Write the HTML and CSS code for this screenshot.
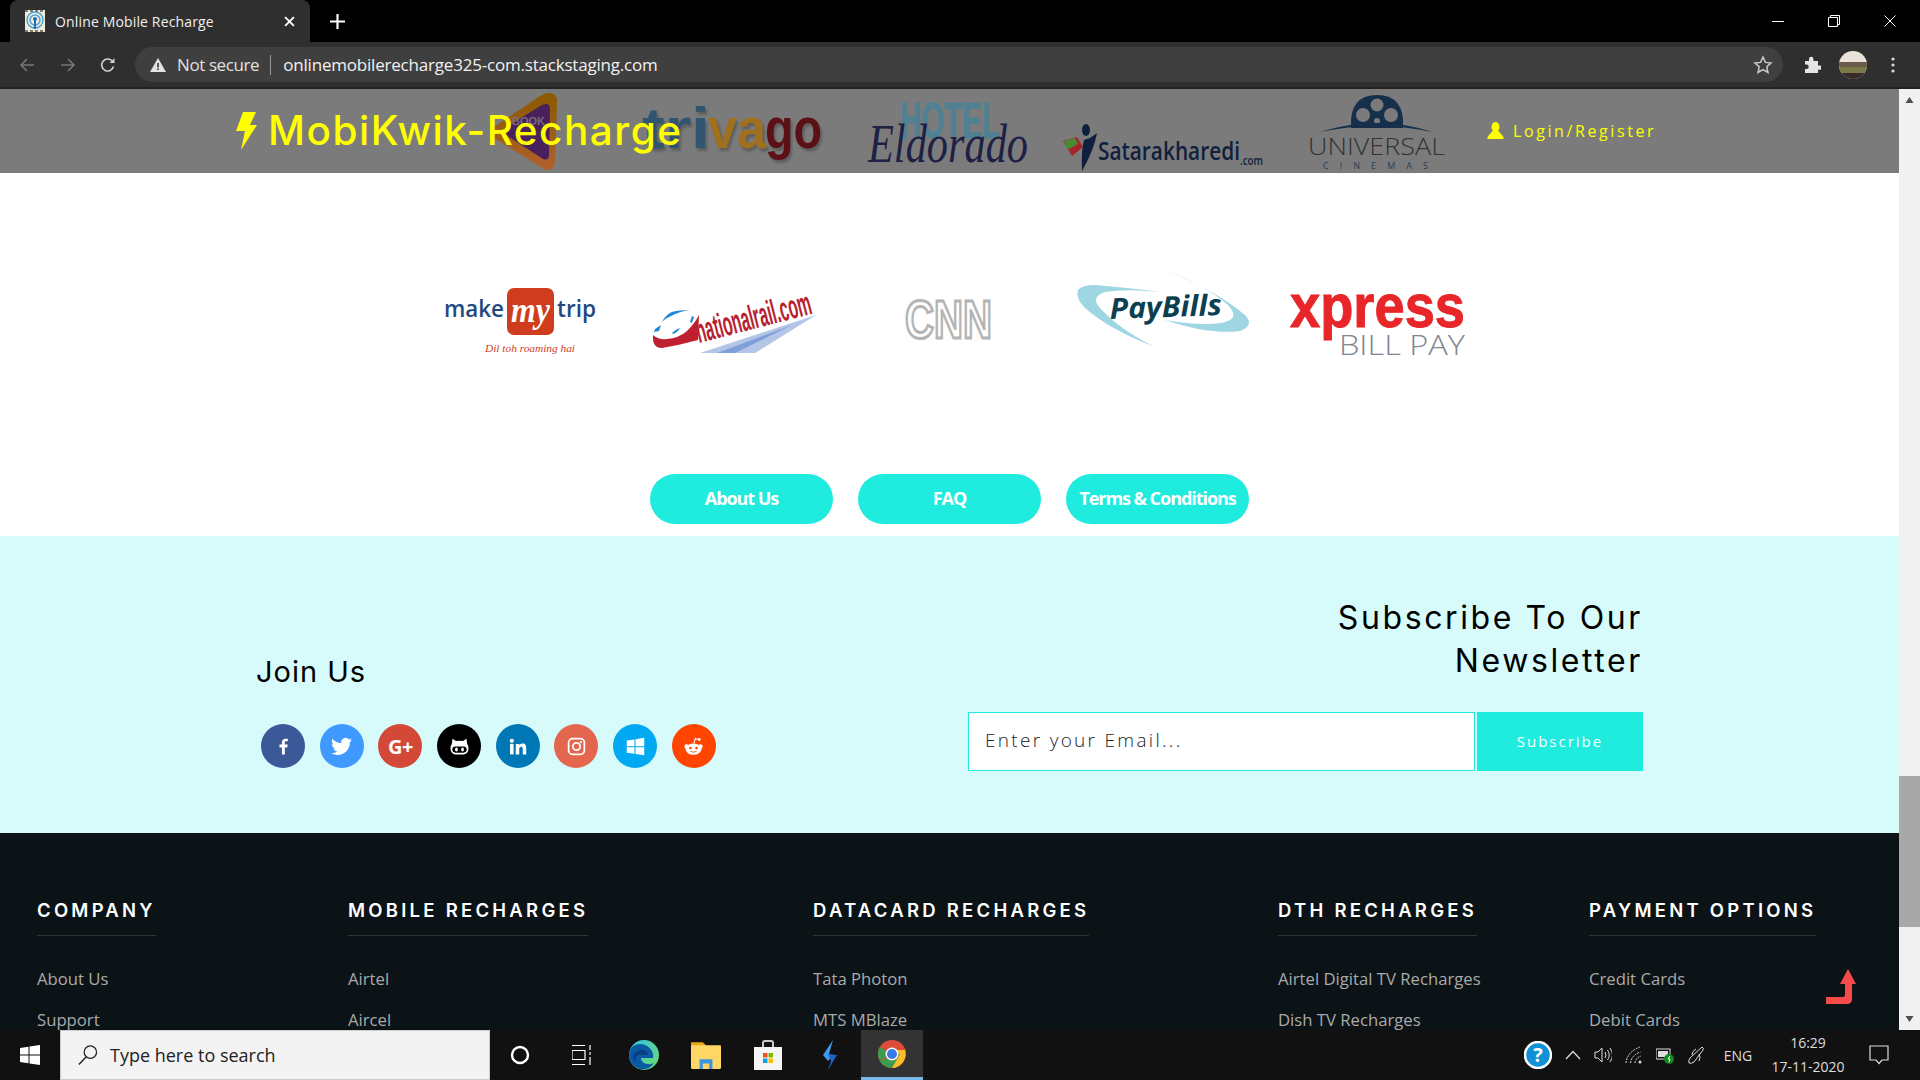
FILE: index.html
```html
<!DOCTYPE html>
<html>

<head>
	<meta charset="UTF-8">
	<meta name="viewport" content="width=device-width, initial-scale=1.0">
	<title>Online Mobile Recharge</title>
	<link rel="stylesheet" href="styles.css">
</head>

<body>
	<div class="tabstrip">
		<div class="tab">
			<svg class="favicon" viewBox="0 0 20 22">
				<rect width="20" height="22" fill="#f4ecd8" />
				<path d="M0 1h20M0 21h20" stroke="#333" stroke-width="2" stroke-dasharray="3 2" opacity=".6" />
				<circle cx="10" cy="10" r="8" fill="none" stroke="#4aa3d8" stroke-width="1.5" />
				<circle cx="10" cy="10" r="5" fill="none" stroke="#4aa3d8" stroke-width="1.5" />
				<circle cx="10" cy="9" r="2" fill="#1f6fb5" />
				<rect x="9" y="9" width="2" height="10" fill="#1f6fb5" />
			</svg>
			<span class="tab-title">Online Mobile Recharge</span>
			<svg class="tab-close" viewBox="0 0 10 10"><path d="M1 1l8 8M9 1l-8 8" stroke="#fff" stroke-width="1.7" /></svg>
		</div>
		<svg class="tab-new" viewBox="0 0 14 14"><path d="M7 0v14M0 7h14" stroke="#fff" stroke-width="2" /></svg>
		<div class="winctrl">
			<svg viewBox="0 0 12 12"><path d="M0 6.500h12" stroke="#fff" /></svg>
			<svg viewBox="0 0 12 12"><path d="M.5 2.500h9v9h-9zM2.500 2.500v-2h9v9h-2" fill="none" stroke="#fff" /></svg>
			<svg viewBox="0 0 12 12"><path d="M.5.500l11 11M11.500.500l-11 11" stroke="#fff" /></svg>
		</div>
	</div>

	<div class="toolbar">
		<svg class="nav" viewBox="0 0 16 16"><path d="M15 8H2M8 2L2 8l6 6" fill="none" stroke="#777" stroke-width="1.6" /></svg>
		<svg class="nav" viewBox="0 0 16 16"><path d="M1 8h13M8 2l6 6-6 6" fill="none" stroke="#777" stroke-width="1.6" /></svg>
		<svg class="nav" viewBox="0 0 16 16"><path d="M13.500 9.500A6 6 0 1 1 12 3.800" fill="none" stroke="#d0d0d0" stroke-width="1.6" /><path d="M14.500 1v5h-5z" fill="#d0d0d0" /></svg>
		<div class="omnibox">
			<svg class="warn" viewBox="0 0 16 14"><path d="M8 0l8 14H0z" fill="#e3e3e3" /><path d="M7.200 5h1.600v4.500H7.200zM7.200 10.500h1.600V12H7.200z" fill="#333" /></svg>
			<span class="notsecure">Not secure</span>
			<span class="urlsep"></span>
			<span class="url">onlinemobilerecharge325-com.stackstaging.com</span>
			<svg class="star" viewBox="0 0 20 20"><path d="M10 2l2.400 5.400 5.600.6-4.200 3.800 1.200 5.700L10 14.600l-5 2.900 1.200-5.700L2 8l5.600-.6z" fill="none" stroke="#ccc" stroke-width="1.500" /></svg>
		</div>
		<svg class="puzzle" viewBox="0 0 18 18"><path d="M2 5h4V3a2.200 2.200 0 0 1 4.400 0v2H15v4.400h2a2.200 2.200 0 0 1 0 4.400h-2V17H2v-4h1.500a2.200 2.200 0 0 0 0-4.400H2z" fill="#e4e4e4" /></svg>
		<svg class="avatar" viewBox="0 0 28 28">
			<clipPath id="av"><circle cx="14" cy="14" r="14" /></clipPath>
			<g clip-path="url(#av)">
				<rect width="28" height="28" fill="#e9e3da" />
				<rect y="11" width="28" height="5" fill="#6b5a4a" />
				<rect y="16" width="28" height="6" fill="#7d7a4a" />
				<rect y="22" width="28" height="6" fill="#3a2a2a" />
			</g>
		</svg>
		<svg class="kebab" viewBox="0 0 4 16"><circle cx="2" cy="2" r="1.600" fill="#ddd" /><circle cx="2" cy="8" r="1.600" fill="#ddd" /><circle cx="2" cy="14" r="1.600" fill="#ddd" /></svg>
	</div>

	<div class="viewport">
		<div class="page">
			<header class="topbar">
				<div class="logos">
					<svg viewBox="413 89 215 84" width="215" height="84">
						<defs>
							<linearGradient id="bookrim" x1="0" y1="0" x2="0" y2="1">
								<stop offset="0" stop-color="#8a5a00" />
								<stop offset="1" stop-color="#b0602c" />
							</linearGradient>
						</defs>
						<path d="M549 93q9 0 8 10l-2 58q-1 12-11 8l-50-31q-7-5 0-11l46-31q5-3 9-3z" fill="url(#bookrim)" />
						<path d="M546 104q4 0 4 5l-1 46q0 6-6 4l-37-24q-6-4 0-8l36-22z" fill="#48205c" />
						<text x="512" y="125" class="logo-book">BOOK</text>
					</svg>
					<svg viewBox="628 89 215 84" width="215" height="84">
						<g class="logo-shadow">
							<text x="642" y="148" textLength="68" lengthAdjust="spacingAndGlyphs" class="logo-trivago" fill="#30566f">tri</text>
							<text x="708" y="148" textLength="58" lengthAdjust="spacingAndGlyphs" class="logo-trivago" fill="#a0701c">va</text>
							<text x="765" y="148" textLength="57" lengthAdjust="spacingAndGlyphs" class="logo-trivago" fill="#5c1015">go</text>
						</g>
					</svg>
					<svg viewBox="843 89 215 84" width="215" height="84">
						<text x="900" y="138" textLength="100" lengthAdjust="spacingAndGlyphs" class="logo-hotel">HOTEL</text>
						<text x="868" y="162" textLength="160" lengthAdjust="spacingAndGlyphs" class="logo-eldorado">Eldorado</text>
					</svg>
					<svg viewBox="1058 89 215 84" width="215" height="84">
						<path d="M1063 141l14-4 6 10-11 9z" fill="#a8242a" />
						<path d="M1064 141l11-3 3 6-11 6z" fill="#4b8a35" />
						<ellipse cx="1086" cy="130" rx="4" ry="6" fill="#101f3d" />
						<path d="M1090 138l7-5q-3 17-15 38-1-20 2-31z" fill="#101f3d" />
						<text x="1098" y="160" textLength="142" lengthAdjust="spacingAndGlyphs" class="logo-satara">Satarakharedi</text>
						<text x="1240" y="165" textLength="23" lengthAdjust="spacingAndGlyphs" class="logo-satara-com">.com</text>
					</svg>
					<svg viewBox="1273 89 215 84" width="215" height="84">
						<path d="M1351 128q-2-33 26-33t26 33z" fill="#162f4a" />
						<circle cx="1377" cy="105" r="6.500" fill="#7b7b7b" />
						<circle cx="1363" cy="115" r="7" fill="#7b7b7b" />
						<circle cx="1391" cy="115" r="7" fill="#7b7b7b" />
						<circle cx="1377" cy="121" r="3" fill="#7b7b7b" />
						<path d="M1320 132q57-18 113 0q-57-12-113 0z" fill="#162f4a" />
						<text x="1308" y="155" textLength="137" lengthAdjust="spacingAndGlyphs" class="logo-universal">UNIVERSAL</text>
						<text x="1323" y="169" textLength="105" class="logo-cinemas">CINEMAS</text>
					</svg>
				</div>
				<a class="brand">
					<svg class="bolt" viewBox="0 0 21 38"><path d="M7 0h13l-6 13h7L5 38l4-19H0z" fill="#ff0" /></svg>
					<span>MobiKwik-Recharge</span>
				</a>
				<a class="login">
					<svg class="login-icon" viewBox="0 0 17 17"><ellipse cx="8.500" cy="5" rx="4" ry="5" fill="#ff0" /><path d="M5.500 9h6l5 6v2H.5v-2z" fill="#ff0" /></svg>
					<span>Login/Register</span>
				</a>
			</header>

			<section class="partners">
				<div class="logos">
					<svg viewBox="413 270 215 100" width="215" height="100">
						<text x="444" y="317" textLength="60" lengthAdjust="spacingAndGlyphs" class="logo-mmt">make</text>
						<rect x="507" y="288" width="47" height="47" rx="7" fill="#d03d1e" />
						<text x="511" y="322" textLength="39" lengthAdjust="spacingAndGlyphs" class="logo-my">my</text>
						<text x="557" y="317" textLength="39" lengthAdjust="spacingAndGlyphs" class="logo-mmt">trip</text>
						<text x="485" y="352" textLength="90" lengthAdjust="spacingAndGlyphs" class="logo-dil">Dil toh roaming hai</text>
					</svg>
					<svg viewBox="628 270 215 100" width="215" height="100">
						<path d="M816 315L755 353h-55z" fill="#b3c6e8" />
						<path d="M792 325L735 353h-18z" fill="#7f9fd8" />
						<path d="M653 335q5 5 14 4 12-1 20-8 8-8 12-16l-1 25q-18 5-36 8-10 0-9-13z" fill="#c01f30" />
						<path d="M662 322q5-10 14-11t14-1q-9 1-19 6-5 2-9 6z" fill="#1e8ad6" />
						<path d="M655 329l6-4-2 6-5 1zM672 333q4-4 8-5-2 4-7 6zM690 322l2-6 2 1-2 6z" fill="#1e8ad6" />
						<text x="699" y="343" textLength="118" lengthAdjust="spacingAndGlyphs" transform="rotate(-14.500 699 343)" class="logo-rail">nationalrail.com</text>
					</svg>
					<svg viewBox="843 270 215 100" width="215" height="100">
						<text x="905" y="338" textLength="87" lengthAdjust="spacingAndGlyphs" class="logo-cnn">CNN</text>
					</svg>
					<svg viewBox="1058 270 215 100" width="215" height="100">
						<path d="M1078 290q7-7 27-4 35 3 62 7-37-5-62-1-15 5-5 16 20 22 55 39-45-17-70-39-10-10-7-18z" fill="#9ed6e4" />
						<path d="M1165 270q50 20 80 45 10 10-5 16-30 4-75-11 40 7 60 2 15-4 3-17-23-20-63-35z" fill="#9ed6e4" />
						<text x="1110" y="319" textLength="112" lengthAdjust="spacingAndGlyphs" transform="rotate(-2 1110 319)" class="logo-paybills">PayBills</text>
					</svg>
					<svg viewBox="1273 270 215 100" width="215" height="100">
						<text x="1290" y="327" textLength="175" lengthAdjust="spacingAndGlyphs" class="logo-xpress">xpress</text>
						<text x="1339" y="355" textLength="126" lengthAdjust="spacingAndGlyphs" class="logo-billpay">BILL PAY</text>
					</svg>
				</div>
				<div class="pillrow">
					<a class="pill">About Us</a>
					<a class="pill">FAQ</a>
					<a class="pill">Terms &amp; Conditions</a>
				</div>
			</section>

			<section class="connect">
				<div class="join">
					<h2>Join Us</h2>
					<div class="social">
						<a class="soc soc-fb"><svg viewBox="0 0 24 24"><path d="M13.500 21v-8h2.800l.5-3.300h-3.300V7.700c0-1 .3-1.600 1.700-1.600h1.700V3.200c-.4 0-1.400-.2-2.500-.2-2.500 0-4.200 1.500-4.200 4.300v2.400H7.400V13h2.800v8z" fill="#fff" /></svg></a>
						<a class="soc soc-tw"><svg viewBox="0 0 24 24"><path d="M23.953 4.570a10 10 0 01-2.825.775 4.958 4.958 0 002.163-2.723c-.951.555-2.005.959-3.127 1.184a4.920 4.920 0 00-8.384 4.482C7.690 8.095 4.067 6.130 1.640 3.162a4.822 4.822 0 00-.666 2.475c0 1.710.870 3.213 2.188 4.096a4.904 4.904 0 01-2.228-.616v.060a4.923 4.923 0 003.946 4.827 4.996 4.996 0 01-2.212.085 4.936 4.936 0 004.604 3.417 9.867 9.867 0 01-6.102 2.105c-.390 0-.779-.023-1.170-.067a13.995 13.995 0 007.557 2.209c9.053 0 13.998-7.496 13.998-13.985 0-.210 0-.420-.015-.630A9.935 9.935 0 0024 4.590z" fill="#fff" /></svg></a>
						<a class="soc soc-gp"><span>G+</span></a>
						<a class="soc soc-gh"><svg viewBox="0 0 24 24"><path d="M4 3l4 2.800q4-1 8 0L20 3l.8 6q1.700 2 1.500 5.500-.3 5.500-5.300 6.500H7q-5-1-5.300-6.500Q1.500 11 3.200 9z" fill="#fff" /><rect x="3.800" y="12" width="16.400" height="7" rx="3.500" fill="#000" /><ellipse cx="8.500" cy="15.500" rx="1.600" ry="2.300" fill="#fff" /><ellipse cx="15.500" cy="15.500" rx="1.600" ry="2.300" fill="#fff" /></svg></a>
						<a class="soc soc-in"><svg viewBox="0 0 24 24"><circle cx="5.500" cy="5.500" r="2.400" fill="#fff" /><rect x="3.500" y="9" width="4" height="12" fill="#fff" /><path d="M10 9h3.800v1.700c.7-1.200 2.100-2 3.900-2 3.400 0 4.300 2.200 4.300 5.400V21h-4v-6c0-1.500-.3-2.800-1.900-2.800-1.700 0-2.100 1.300-2.100 2.800v6h-4z" fill="#fff" /></svg></a>
						<a class="soc soc-ig"><svg viewBox="0 0 24 24"><rect x="3" y="3" width="18" height="18" rx="4.500" fill="none" stroke="#fff" stroke-width="2" /><circle cx="12" cy="12" r="4.200" fill="none" stroke="#fff" stroke-width="2" /><circle cx="17" cy="7" r="1.200" fill="#fff" /></svg></a>
						<a class="soc soc-win"><svg viewBox="0 0 24 24"><path d="M2 5.200l8.800-1.300v7.700H2zM12 3.700L22 2v9.600H12zM2 12.800h8.800v7.500L2 19zM12 12.800h10V22l-10-1.500z" fill="#fff" /></svg></a>
						<a class="soc soc-rd"><svg viewBox="0 0 24 24"><path d="M12.500 8.500L14 3l4 1" fill="none" stroke="#fff" stroke-width="1.200" /><circle cx="18.500" cy="4" r="1.700" fill="#fff" /><circle cx="4" cy="12" r="2.500" fill="#fff" /><circle cx="20" cy="12" r="2.500" fill="#fff" /><ellipse cx="12" cy="15" rx="9" ry="6.500" fill="#fff" /><circle cx="8.500" cy="13.800" r="1.500" fill="#ff4500" /><circle cx="15.500" cy="13.800" r="1.500" fill="#ff4500" /><path d="M8.500 17.500q3.500 2 7 0" fill="none" stroke="#ff4500" stroke-width="1" /></svg></a>
					</div>
				</div>
				<div class="newsletter">
					<h2>Subscribe To Our<br>Newsletter</h2>
					<form class="subform">
						<input type="text" class="subinput" placeholder="Enter your Email...">
						<button type="button" class="subbtn">Subscribe</button>
					</form>
				</div>
			</section>

			<footer class="sitefoot">
				<div class="footcol">
					<h3>COMPANY</h3>
					<ul>
						<li>About Us</li>
						<li>Support</li>
					</ul>
				</div>
				<div class="footcol">
					<h3>MOBILE RECHARGES</h3>
					<ul>
						<li>Airtel</li>
						<li>Aircel</li>
					</ul>
				</div>
				<div class="footcol">
					<h3>DATACARD RECHARGES</h3>
					<ul>
						<li>Tata Photon</li>
						<li>MTS MBlaze</li>
					</ul>
				</div>
				<div class="footcol">
					<h3>DTH RECHARGES</h3>
					<ul>
						<li>Airtel Digital TV Recharges</li>
						<li>Dish TV Recharges</li>
					</ul>
				</div>
				<div class="footcol">
					<h3>PAYMENT OPTIONS</h3>
					<ul>
						<li>Credit Cards</li>
						<li>Debit Cards</li>
					</ul>
				</div>
			</footer>

			<svg class="totop" viewBox="0 0 30 36"><path d="M22 0l8 15h-4v15q0 5-5 5H0v-7h17q2 0 2-2V15h-5z" fill="#f44a4a" /></svg>
		</div>
		<div class="scrollbar">
			<svg viewBox="0 0 8 6"><path d="M4 0l4 6H0z" fill="#505050" /></svg>
			<div class="track"><div class="thumb"></div></div>
			<svg viewBox="0 0 8 6"><path d="M0 0h8L4 6z" fill="#505050" /></svg>
		</div>
	</div>

	<div class="taskbar">
		<div class="startbtn">
			<svg viewBox="0 0 20 20"><path d="M0 3l8.500-1.200v7.700H0zM9.500 1.600L20 0v9.500H9.500zM0 10.500h8.500v7.700L0 17zM9.500 10.500H20V20L9.500 18.400z" fill="#fff" /></svg>
		</div>
		<div class="searchbox">
			<svg viewBox="0 0 22 22"><circle cx="14" cy="8" r="6.500" fill="none" stroke="#222" stroke-width="1.300" /><path d="M9.500 13L2 21" stroke="#222" stroke-width="1.500" /></svg>
			<span>Type here to search</span>
		</div>
		<div class="tasklist">
			<div class="taskicon"><svg class="i20" viewBox="0 0 20 20"><circle cx="10" cy="10" r="8" fill="none" stroke="#fff" stroke-width="2.400" /></svg></div>
			<div class="taskicon"><svg class="i20" viewBox="0 0 20 20"><path d="M0 .5h13M0 19.500h13M0 5.500h13v9H0z" fill="none" stroke="#fff" stroke-width="1.200" /><path d="M18 0v5M18 7v3M18 12v8" stroke="#fff" stroke-width="1.200" /></svg></div>
			<div class="taskicon">
				<svg class="i30" viewBox="0 0 30 30">
					<defs>
						<linearGradient id="edge1" x1="0" y1="0" x2="1" y2="1"><stop offset="0" stop-color="#2fc6e6" /><stop offset="1" stop-color="#6fdc6a" /></linearGradient>
					</defs>
					<circle cx="15" cy="15" r="15" fill="url(#edge1)" />
					<path d="M0 15C0 6 9 2 16 5c7 3 9 9 8 13H12c0 5 7 8 13 5-4 6-10 7-14 6C4 27 0 21 0 15z" fill="#0c5aa6" />
					<path d="M4 18c0-5 5-9 11-8 3 1 4 3 4 5h-9c-2 0-4 2-3 7-2-1-3-2-3-4z" fill="#0a3f85" />
				</svg>
			</div>
			<div class="taskicon">
				<svg class="i30" viewBox="0 0 28 26"><path d="M0 1h11l3 3v3H0z" fill="#e8a818" /><rect y="4" width="28" height="22" rx="1" fill="#ffd767" /><path d="M8 26v-9h12v9h-3v-5h-6v5z" fill="#3a96dd" /></svg>
			</div>
			<div class="taskicon">
				<svg class="i30" viewBox="0 0 28 30"><path d="M9 8V3q0-2 2-2h6q2 0 2 2v5" fill="none" stroke="#ccc" stroke-width="2" /><rect y="7" width="28" height="23" fill="#f5f5f5" /><rect x="9" y="13" width="4.500" height="4.500" fill="#f25022" /><rect x="14.500" y="13" width="4.500" height="4.500" fill="#7fba00" /><rect x="9" y="18.500" width="4.500" height="4.500" fill="#00a4ef" /><rect x="14.500" y="18.500" width="4.500" height="4.500" fill="#ffb900" /></svg>
			</div>
			<div class="taskicon">
				<svg class="i30" viewBox="0 0 16 30"><path d="M11 0L1 15l5 6 5-6-4-1z" fill="#3f9bf0" /><path d="M6 14l9 1-9 15 3-9z" fill="#1d62c4" /></svg>
			</div>
			<div class="taskicon taskicon-active">
				<svg class="i30" viewBox="0 0 30 30">
					<circle cx="15" cy="15" r="14" fill="#dd4b39" />
					<path d="M15 15L2.900 22a14 14 0 0 1-.1-14z" fill="#3b9c4c" />
					<path d="M2.900 22A14 14 0 0 0 15 29l8-14z" fill="#3b9c4c" />
					<path d="M15 29a14 14 0 0 0 13-18H15l8 4z" fill="#f6c02d" />
					<circle cx="15" cy="15" r="6.500" fill="#fff" />
					<circle cx="15" cy="15" r="5" fill="#3b78e7" />
				</svg>
			</div>
		</div>
		<div class="tray">
			<svg class="tray-help" viewBox="0 0 28 28"><circle cx="14" cy="14" r="13" fill="#0f8fd6" stroke="#fff" stroke-width="2.500" /><text x="14" y="21" class="helpq">?</text></svg>
			<svg class="tray-chev" viewBox="0 0 16 10"><path d="M1 9l7-7.500L15 9" fill="none" stroke="#ddd" stroke-width="1.300" /></svg>
			<svg class="tray-i" viewBox="0 0 18 18"><path d="M1 6h3l4-4v14l-4-4H1z" fill="none" stroke="#ddd" /><path d="M11 6q2 3 0 6M13.500 4q3.500 5 0 10M16 2q5 7 0 14" fill="none" stroke="#ddd" /></svg>
			<svg class="tray-i" viewBox="0 0 18 18"><path d="M1 17Q2 6 15 1M5.500 17q1-8 10-11M10 17q.5-5 6-7" fill="none" stroke="#ddd" stroke-dasharray="2 1" /><circle cx="15" cy="16" r="1.500" fill="#ddd" /></svg>
			<svg class="tray-i" viewBox="0 0 18 18"><rect x="0" y="3" width="14" height="10" fill="#111" stroke="#ddd" /><rect x="2" y="5" width="10" height="6" fill="#ddd" /><circle cx="13" cy="13" r="5" fill="#0f8a1e" /><path d="M14 10l-2 3h2l-1 3" fill="none" stroke="#fff" /></svg>
			<svg class="tray-i" viewBox="0 0 18 18"><path d="M15 1q2 1 1 3L7 16q-3 2-5 1-1-2 1-5zM9 3q-4 2-4 6M12 8q2 3 0 7" fill="none" stroke="#ddd" /></svg>
			<span class="tray-lang">ENG</span>
			<div class="tray-clock">
				<span>16:29</span>
				<span>17-11-2020</span>
			</div>
			<svg class="tray-note" viewBox="0 0 20 20"><path d="M1 1h18v14h-6l-3 3.500L7 15H1z" fill="none" stroke="#ddd" stroke-width="1.200" /></svg>
		</div>
	</div>
</body>

</html>
```

FILE: styles.css
```css
html {
	box-sizing: border-box;
}

*,
*:before,
*:after {
	box-sizing: inherit;
}

body,
h2,
h3,
ul {
	margin: 0;
	padding: 0;
	font-weight: normal;
}

ul {
	list-style: none;
}

svg {
	display: block;
	flex: none;
}

:root {
	--cyan: #1fecdf;
	--chrome: #2f2f2f;
	--head-font: "Inter", "Liberation Sans", sans-serif;
	--body-font: "Open Sans", "Liberation Sans", sans-serif;
}

body {
	display: flex;
	flex-direction: column;
	height: 1080px;
	overflow: hidden;
	font-family: var(--body-font);
	background: #000;
}

/* browser chrome */
.tabstrip {
	display: flex;
	align-items: center;
	height: 42px;
	background: #000;
}

.tab {
	display: flex;
	align-items: center;
	width: 300px;
	height: 42px;
	margin-left: 10px;
	padding: 0 15px;
	border-radius: 8px 8px 0 0;
	background: var(--chrome);
}

.favicon {
	width: 20px;
	height: 22px;
}

.tab-title {
	margin-left: 10px;
	font-size: 14px;
	letter-spacing: .15px;
	color: #f0f0f0;
}

.tab-close {
	width: 11px;
	height: 11px;
	margin-left: auto;
}

.tab-new {
	width: 15px;
	height: 15px;
	margin-left: 20px;
}

.winctrl {
	display: flex;
	gap: 44px;
	margin-left: auto;
	padding-right: 24px;
}

.winctrl svg {
	width: 12px;
	height: 12px;
}

.toolbar {
	display: flex;
	align-items: center;
	height: 47px;
	padding-left: 19px;
	background: var(--chrome);
	border-bottom: 2px solid #222;
}

.nav {
	width: 16px;
	height: 16px;
	margin-right: 24.500px;
}

.omnibox {
	display: flex;
	align-items: center;
	width: 1648px;
	height: 35px;
	margin-left: -5.500px;
	padding: 0 10px 0 15px;
	border-radius: 18px;
	background: #3f3f3f;
	color: #e8e8e8;
	font-size: 17px;
}

.warn {
	width: 16px;
	height: 14px;
	margin-right: 11px;
}

.notsecure {
	letter-spacing: -.4px;
	color: #e0e0e0;
}

.urlsep {
	width: 1px;
	height: 20px;
	margin: 0 11px;
	background: #999;
}

.url {
	margin-left: 1px;
	letter-spacing: -.2px;
	color: #f2f2f2;
}

.star {
	width: 20px;
	height: 20px;
	margin-left: auto;
}

.puzzle {
	width: 18px;
	height: 18px;
	margin-left: 20px;
}

.avatar {
	width: 28px;
	height: 28px;
	margin-left: 18px;
}

.kebab {
	width: 4px;
	height: 16px;
	margin-left: 24px;
}

/* page */
.viewport {
	display: flex;
	flex: 1;
	min-height: 0;
}

.page {
	position: relative;
	flex: 1;
	min-width: 0;
	overflow: hidden;
	background: #fff;
}

.topbar {
	position: relative;
	height: 84px;
	background: #7b7b7b;
}

.logos {
	display: flex;
	justify-content: center;
	padding-left: 2px;
}

.brand {
	position: absolute;
	top: 23px;
	left: 236px;
	display: flex;
	align-items: center;
	gap: 11px;
	color: #ff0;
	font-family: var(--head-font);
	font-size: 40.500px;
	font-weight: 500;
	line-height: 38px;
	letter-spacing: 1.500px;
}

.bolt {
	width: 21px;
	height: 38px;
}

.login {
	position: absolute;
	top: 30px;
	left: 1487px;
	display: flex;
	align-items: center;
	gap: 9px;
	color: #ff0;
	font-size: 16px;
	letter-spacing: 2.600px;
	line-height: 24px;
}

.login-icon {
	width: 17px;
	height: 17px;
	margin-top: -2px;
}

.logo-book {
	font: bold 11px "Liberation Sans", sans-serif;
	fill: #7a6a80;
}

.logo-shadow {
	filter: drop-shadow(2px 3px 1px #5e5e5e);
}

.logo-trivago {
	font: bold 57px "Liberation Sans", sans-serif;
}

.logo-hotel {
	font: bold 50px "Liberation Sans", sans-serif;
	fill: #4f8193;
	stroke: #4f8193;
	stroke-width: 1px;
}

.logo-eldorado {
	font: italic 54px "Liberation Serif", serif;
	fill: #1e2044;
}

.logo-satara {
	font: 600 25px "Open Sans", sans-serif;
	fill: #101f3d;
}

.logo-satara-com {
	font: 600 12px "Open Sans", sans-serif;
	fill: #101f3d;
}

.logo-universal {
	font: 300 24px "Open Sans", sans-serif;
	fill: #333;
}

.logo-cinemas {
	font: 9px "Open Sans", sans-serif;
	fill: #2a3f55;
}

.logo-mmt {
	font: 600 24px "Open Sans", sans-serif;
	fill: #234a80;
}

.logo-my {
	font: italic bold 36px "Liberation Serif", serif;
	fill: #fff;
}

.logo-dil {
	font: italic 11px "Liberation Serif", serif;
	fill: #d03d1e;
}

.logo-rail {
	font: bold 34px "Liberation Sans", sans-serif;
	fill: #b81f2f;
}

.logo-cnn {
	font: bold 54px "Liberation Sans", sans-serif;
	fill: #fff;
	stroke: #b4b4b4;
	stroke-width: 3px;
}

.logo-paybills {
	font: italic bold 29px "Open Sans", sans-serif;
	fill: #0c3f50;
}

.logo-xpress {
	font: bold 62px "Liberation Sans", sans-serif;
	fill: #e8262a;
	stroke: #e8262a;
	stroke-width: 1px;
}

.logo-billpay {
	font: 300 28px "Open Sans", sans-serif;
	fill: #7d8790;
}

.partners {
	padding-top: 97px;
}

.pillrow {
	display: flex;
	justify-content: center;
	gap: 25px;
	margin-top: 104px;
	padding-bottom: 12px;
}

.pill {
	display: flex;
	align-items: center;
	justify-content: center;
	width: 183px;
	height: 50px;
	padding-bottom: 3px;
	border-radius: 25px;
	background: var(--cyan);
	color: #fff;
	font-size: 18px;
	font-weight: 700;
	letter-spacing: -1.050px;
}

.connect {
	display: flex;
	justify-content: space-between;
	height: 297px;
	padding: 0 256px 0 256px;
	background: #d6fbfa;
	color: #000;
	font-family: var(--head-font);
}

.join h2 {
	margin-top: 116px;
	font-size: 29px;
	line-height: 40px;
	letter-spacing: 1px;
}

.social {
	display: flex;
	gap: 14.700px;
	margin-top: 32px;
	padding-left: 5px;
}

.soc {
	display: flex;
	align-items: center;
	justify-content: center;
	width: 44px;
	height: 44px;
	border-radius: 50%;
}

.soc svg {
	width: 21px;
	height: 21px;
}

.soc-fb {
	background: #3b5998;
}

.soc-tw {
	background: #4099ff;
}

.soc-gp {
	background: #d34836;
	color: #fff;
	font: bold 20px "Open Sans", sans-serif;
	letter-spacing: -.5px;
}

.soc-gh {
	background: #000;
}

.soc-in {
	background: #0077b5;
}

.soc-ig {
	background: #e4664f;
}

.soc-win {
	background: #00a9f1;
}

.soc-rd {
	background: #ff4500;
}

.newsletter {
	width: 675px;
}

.newsletter h2 {
	margin-top: 60px;
	text-align: right;
	font-size: 32px;
	line-height: 43px;
	letter-spacing: 2.600px;
}

.subform {
	display: flex;
	margin-top: 30px;
}

.subinput {
	width: 507px;
	height: 59px;
	padding: 0 16px 4px;
	border: 1px solid var(--cyan);
	outline: none;
	background: #fff;
	font-family: var(--body-font);
	font-size: 19px;
	font-weight: 300;
	letter-spacing: 2.300px;
}

.subinput::placeholder {
	color: #222;
	opacity: 1;
}

.subbtn {
	width: 166px;
	height: 59px;
	margin-left: 2px;
	padding-bottom: 2px;
	border: none;
	background: var(--cyan);
	color: #fff;
	font-family: var(--body-font);
	font-size: 15px;
	letter-spacing: 2px;
}

.sitefoot {
	display: grid;
	grid-template-columns: 311px 465px 465px 311px 311px;
	height: 300px;
	padding: 65px 0 0 37px;
	background: #0b1316;
}

.footcol h3 {
	display: table;
	padding-bottom: 13px;
	border-bottom: 1px solid #333;
	color: #fff;
	font-family: var(--head-font);
	font-size: 18.500px;
	font-weight: 600;
	line-height: 24px;
	letter-spacing: 3.250px;
}

.footcol ul {
	margin-top: 31px;
}

.footcol li {
	margin-bottom: 16.500px;
	color: #aaa;
	font-size: 16.700px;
	line-height: 24px;
}

.totop {
	position: absolute;
	top: 880px;
	left: 1826px;
	width: 30px;
	height: 36px;
}

.scrollbar {
	display: flex;
	flex-direction: column;
	align-items: center;
	width: 21px;
	padding: 8px 0;
	background: #f1f1f1;
}

.scrollbar svg {
	width: 9px;
	height: 6px;
}

.track {
	flex: 1;
	width: 100%;
	padding-top: 673px;
}

.thumb {
	height: 151px;
	background: #a8a8a8;
}

/* windows taskbar */
.taskbar {
	display: flex;
	align-items: center;
	height: 50px;
	background: #111;
}

.startbtn {
	display: flex;
	justify-content: center;
	width: 60px;
}

.startbtn svg {
	width: 20px;
	height: 20px;
}

.searchbox {
	display: flex;
	align-items: center;
	gap: 12px;
	width: 430px;
	height: 50px;
	padding-left: 16px;
	border: 1px solid #ccc;
	background: #f3f3f3;
	color: #222;
	font-size: 18px;
}

.searchbox svg {
	width: 21px;
	height: 24px;
}

.tasklist {
	display: flex;
	margin-left: -1px;
}

.taskicon {
	display: flex;
	align-items: center;
	justify-content: center;
	width: 62px;
	height: 50px;
}

.taskicon-active {
	background: #333;
	border-bottom: 3px solid #76b9ed;
}

.i20 {
	width: 20px;
	height: 20px;
}

.i30 {
	width: 30px;
	height: 30px;
}

.tray {
	display: flex;
	align-items: center;
	gap: 13px;
	margin-left: auto;
	padding-right: 31px;
	color: #ddd;
}

.tray-help {
	width: 28px;
	height: 28px;
}

.helpq {
	font: bold 20px "Open Sans", sans-serif;
	fill: #fff;
	text-anchor: middle;
}

.tray-chev {
	width: 16px;
	height: 10px;
}

.tray-i {
	width: 18px;
	height: 18px;
}

.tray-lang {
	width: 40px;
	text-align: center;
	font-size: 14px;
}

.tray-clock {
	display: flex;
	flex-direction: column;
	align-items: center;
	width: 74px;
	font-size: 14px;
	line-height: 24px;
	white-space: nowrap;
}

.tray-note {
	width: 20px;
	height: 20px;
	margin-left: 11px;
}
```
